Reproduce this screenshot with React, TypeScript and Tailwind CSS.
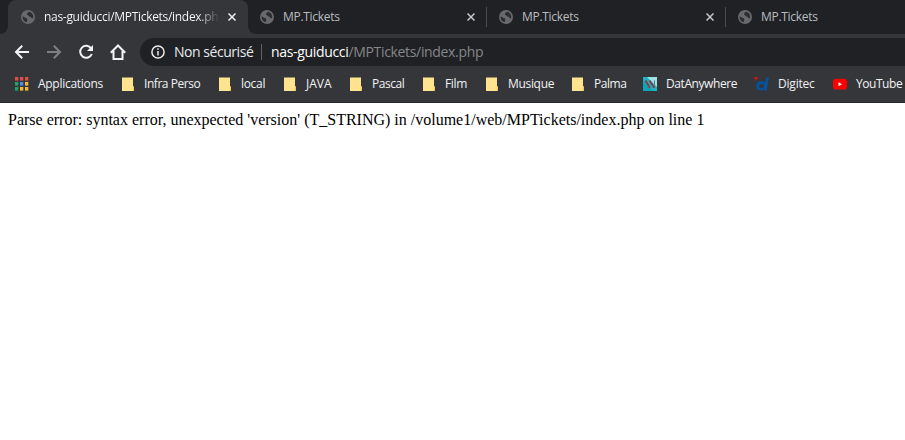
import React from "react";

const ui = "[font-family:'Open_Sans','Noto_Sans',sans-serif]";

function Globe() {
  return (
    <svg className="h-[14px] w-[14px] shrink-0" viewBox="0 0 14 14">
      <circle cx="7" cy="7" r="7" fill="#68696c" />
      <path d="M1.6 6.2 L4.6 8 C6 8 6.5 8.7 6.3 10 L5.6 12.3 C3 11.7 1.4 9.5 1.6 6.2Z M8.4 1.8 C7 2.6 5.8 3.2 6 4.2 C6.3 5 7.2 4.8 7.4 5.6 C7.6 6.4 8.5 6.8 9.4 6.7 C10.2 6.8 10 8 10.9 8.2 L12 8.3 C12.8 5.5 11.2 2.7 8.4 1.8Z" fill="#2b2d31" />
    </svg>
  );
}

function Close({ color }: { color: string }) {
  return (
    <svg className="h-2 w-2 shrink-0" viewBox="0 0 8 8">
      <path d="M.5.5 7.5 7.5M7.5.5.5 7.5" stroke={color} strokeWidth="1.5" />
    </svg>
  );
}

function Folder() {
  return (
    <svg className="h-4 w-4" viewBox="0 0 16 16">
      <path d="M2 1.5H13V10.5H14V15H2Z" fill="#ffe38f" />
      <path d="M13 10.5H14V15H12L13 13Z" fill="#f0c95c" />
    </svg>
  );
}

function Apps() {
  const colors = ["#dd5045", "#dd5045", "#dd5045", "#1ea362", "#4a8af4", "#f4b62f", "#1ea362", "#f4b62f", "#f4b62f"];
  return (
    <svg className="h-4 w-4" viewBox="0 0 16 16">
      {colors.map((c, i) => (
        <rect key={i} x={1 + (i % 3) * 5} y={1 + Math.floor(i / 3) * 5} width="3.3" height="3.6" fill={c} />
      ))}
    </svg>
  );
}

function DatAnywhere() {
  return (
    <svg className="h-4 w-4" viewBox="0 0 16 16">
      <rect x="1" y="1" width="14" height="14" fill="#20b3c2" />
      <path d="M5 1H15V11Z" fill="#9de0e6" />
      <path d="M1 4 11 15H1Z" fill="#11a3b8" />
      <path d="M3.5 4.5 8 12M7.5 4.5 12.5 12" stroke="#8a3540" strokeWidth="1.8" />
      <path d="M12.5 4.5V9.5M5.5 12 8 9" stroke="#4a7a84" fill="none" />
    </svg>
  );
}

function Digitec() {
  return (
    <svg className="h-4 w-4" viewBox="0 0 16 16">
      <path d="M0 1.2H4.2L1.6 5Z" fill="#d8101c" />
      <path d="M12 1.5H15L12.8 14.5H10L10.2 13.3C6.5 16 1.6 14.4 2.2 9.8C2.8 5.4 7.8 3.7 11 6.4ZM8.4 8.1C5.2 7.5 4 11.7 6.9 12.2C10 12.5 11.2 8.7 8.4 8.1Z" fill="#07529a" />
    </svg>
  );
}

function YouTube() {
  return (
    <svg className="h-4 w-4" viewBox="0 0 16 16">
      <rect x="1" y="2.8" width="14" height="10.8" rx="2.8" fill="#f00" />
      <path d="M6.5 6.2 10 8.2 6.5 10.2Z" fill="#fff" />
    </svg>
  );
}

const bookmarks = [
  { label: "Applications", icon: <Apps />, slot: "w-[106px]", text: "tracking-[-0.28px]" },
  { label: "Infra Perso", icon: <Folder />, slot: "w-[97px]", text: "tracking-[-0.45px]" },
  { label: "local", icon: <Folder />, slot: "w-[65px]", text: "tracking-[-0.32px]" },
  { label: "JAVA", icon: <Folder />, slot: "w-[66px]", text: "tracking-[0px]" },
  { label: "Pascal", icon: <Folder />, slot: "w-[73px]", text: "tracking-[-0.45px]" },
  { label: "Film", icon: <Folder />, slot: "w-[63px]", text: "tracking-[-0.32px]" },
  { label: "Musique", icon: <Folder />, slot: "w-[86px]", text: "tracking-[-0.32px]" },
  { label: "Palma", icon: <Folder />, slot: "w-[72px]", text: "tracking-[-0.45px]" },
  { label: "DatAnywhere", icon: <DatAnywhere />, slot: "w-[112px]", text: "tracking-[-0.42px]" },
  { label: "Digitec", icon: <Digitec />, slot: "w-[78px]", text: "tracking-[-0.2px]" },
  { label: "YouTube", icon: <YouTube />, slot: "w-[90px]", text: "tracking-[-0.45px]" },
];

export default function App() {
  return (
    <div className={`flex h-[440px] w-[905px] flex-col overflow-hidden bg-white ${ui}`}>
      <div className="flex h-[34px] shrink-0 bg-[#202124] text-xs">
        <div className="flex w-2 items-end bg-[#35363a]">
          <div className="h-full w-2 rounded-br-lg bg-[#202124]" />
        </div>
        <div className="flex w-60 items-center rounded-t-lg bg-[#35363a] pl-[13px] pr-3">
          <Globe />
          <span className="ml-[9px] w-[176px] whitespace-nowrap bg-gradient-to-r from-white from-88% to-[#35363a] bg-clip-text tracking-[-0.3px] text-transparent">nas-guiducci/MPTickets/index.ph</span>
          <span className="ml-2"><Close color="#f1f1f1" /></span>
        </div>
        <div className="w-[657px] bg-[#35363a]">
          <div className="flex h-full rounded-bl-lg bg-[#202124]">
            {[0, 1, 2].map((i) => (
              <div key={i} className="flex w-[239px] shrink-0 items-center pl-3 text-[#b8bcc0]">
                <Globe />
                <span className="ml-[9px] w-[184px] tracking-[-0.3px]">MP.Tickets</span>
                <Close color="#c5c8cb" />
                <div className="ml-[11px] h-5 w-px bg-[#4a4c50]" />
              </div>
            ))}
          </div>
        </div>
      </div>
      <div className="flex h-8 shrink-0 items-end bg-[#35363a]">
        <div className="flex h-7 w-[140px] shrink-0 items-center pl-[14px]">
          <svg className="h-4 w-4" viewBox="0 0 16 16" fill="none" stroke="#f1f3f4" strokeWidth="2"><path d="M15 8H2.5M8.2 1.8 2 8 8.2 14.2" /></svg>
          <svg className="ml-4 h-4 w-4" viewBox="0 0 16 16" fill="none" stroke="#7d7f82" strokeWidth="2"><path d="M1 8H13.5M7.8 1.8 14 8 7.8 14.2" /></svg>
          <svg className="ml-4 h-4 w-4" viewBox="0 0 16 16"><path d="M13.2 4.5A6 6 0 1 0 13.8 10" fill="none" stroke="#f1f3f4" strokeWidth="2" /><path d="M15 1V7H9Z" fill="#f1f3f4" /></svg>
          <svg className="ml-4 h-4 w-4" viewBox="0 0 16 16" fill="none" stroke="#f1f3f4" strokeWidth="2"><path d="M.8 8.7 8 1.5 15.2 8.7M3.5 7V15H12.5V7" /></svg>
        </div>
        <div className="flex h-7 flex-1 items-center whitespace-nowrap rounded-l-full bg-[#202124] pl-[11px] text-sm">
          <svg className="h-[14px] w-[14px] shrink-0" viewBox="0 0 14 14" fill="none" stroke="#e8eaed" strokeWidth="1.5"><circle cx="7" cy="7" r="6.1" /><path d="M7 6V10.5M7 3.2V4.8" /></svg>
          <span className="ml-[9px] w-[87px] tracking-[-0.46px] text-[#e8eaed]">Non sécurisé</span>
          <div className="h-4 w-px bg-[#5f6165]" />
          <span className="ml-[9px] tracking-[-0.33px] text-white">nas-guiducci<span className="text-[#85878a]">/MPTickets/index.php</span></span>
        </div>
      </div>
      <div className="flex h-[37px] shrink-0 items-center border-b border-[#25262a] bg-[#35363a] pl-[14px] text-xs text-[#f1f3f4]">
        {bookmarks.map((b) => (
          <div key={b.label} className={`flex shrink-0 items-center whitespace-nowrap ${b.slot}`}>
            {b.icon}
            <span className={`ml-2 ${b.text}`}>{b.label}</span>
          </div>
        ))}
      </div>
      <main className="px-2 pt-2 text-base leading-[18px] text-black [font-family:'Liberation_Serif',serif]">
        Parse error: syntax error, unexpected 'version' (T_STRING) in /volume1/web/MPTickets/index.php on line 1
      </main>
    </div>
  );
}
